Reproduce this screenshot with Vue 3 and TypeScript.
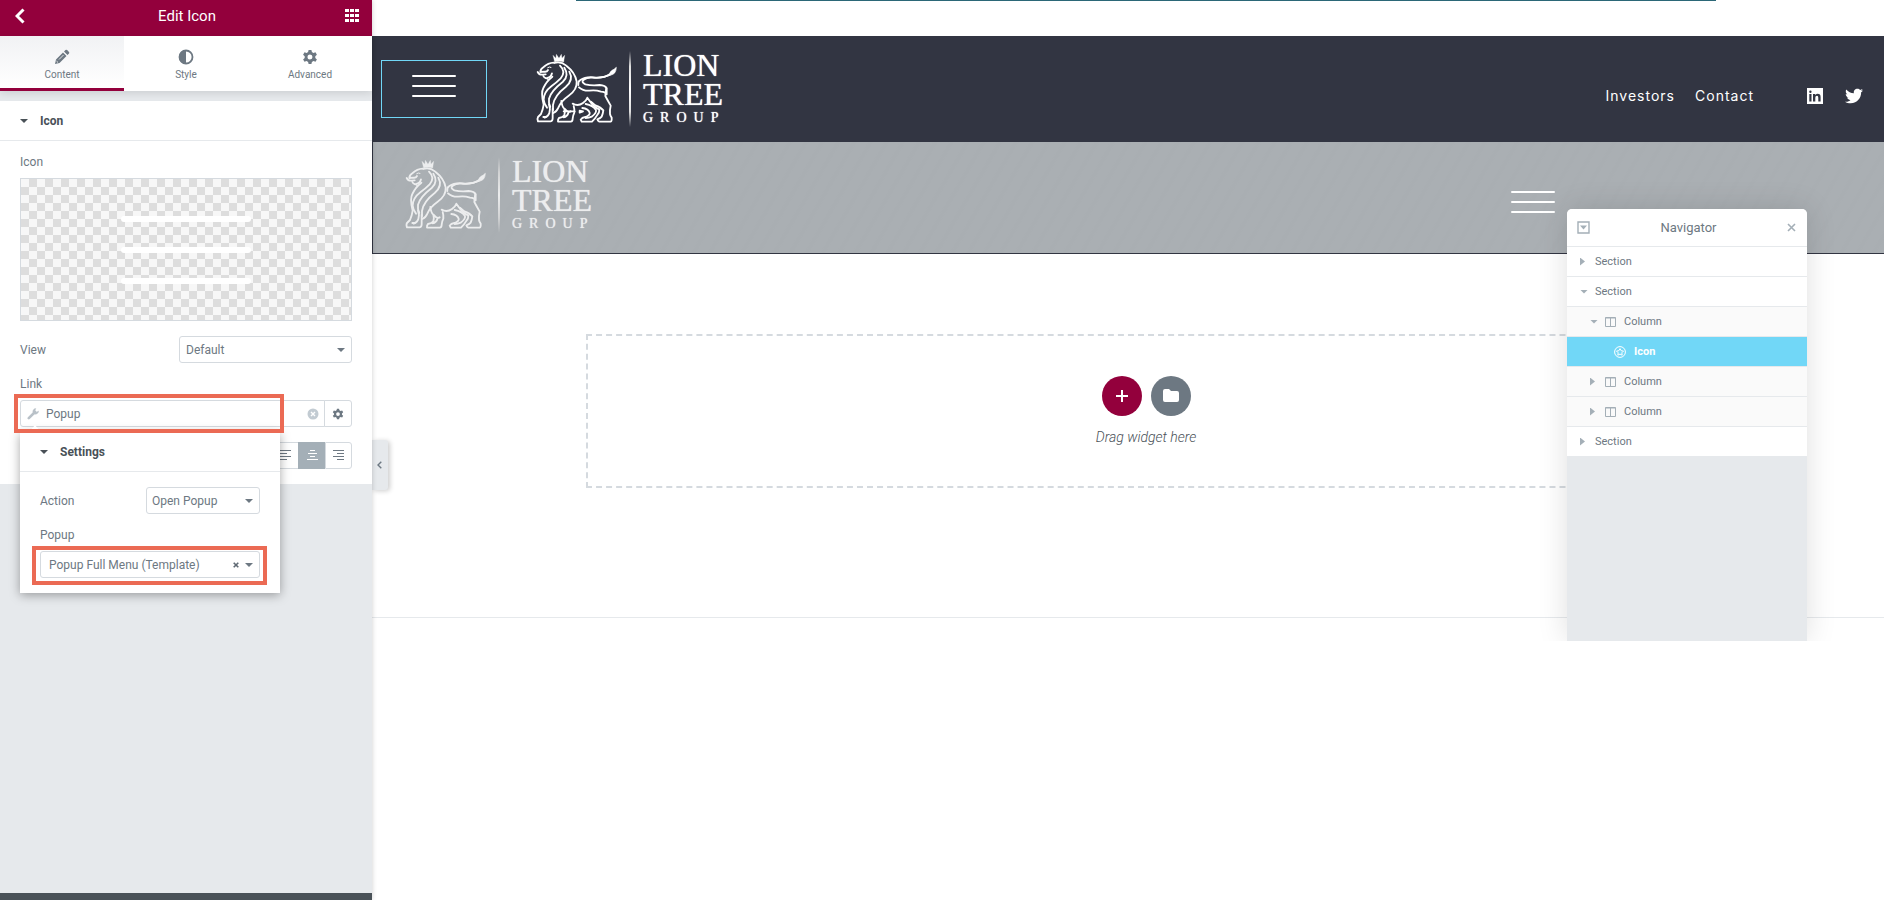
<script setup lang="ts">
import { ref } from 'vue'

interface Tab { id: string; label: string }
interface NavItem { id: number; label: string; kind: 'section' | 'column' | 'widget'; open: boolean }

const tabs: Tab[] = [
  { id: 'content', label: 'Content' },
  { id: 'style', label: 'Style' },
  { id: 'advanced', label: 'Advanced' },
]
const activeTab = ref('content')

const view = ref('Default')
const link = ref('Popup')
const action = ref('Open Popup')
const template = ref('Popup Full Menu (Template)')
const alignment = ref('center')
const alignments = ['left', 'center', 'right']

const alignPaths: Record<string, string> = {
  left: 'M0 1h11M0 4h7M0 7h11M0 10h7',
  center: 'M3 1h5M1 4h9M3 7h5M0 10h11',
  right: 'M0 1h11M4 4h7M0 7h11M4 10h7',
}

const navItems: NavItem[] = [
  { id: 1, label: 'Section', kind: 'section', open: false },
  { id: 2, label: 'Section', kind: 'section', open: true },
  { id: 3, label: 'Column', kind: 'column', open: true },
  { id: 4, label: 'Icon', kind: 'widget', open: false },
  { id: 5, label: 'Column', kind: 'column', open: false },
  { id: 6, label: 'Column', kind: 'column', open: false },
  { id: 7, label: 'Section', kind: 'section', open: false },
]
const logos = ['primary', 'overlay']
const gear = 'M6.600 0h2.800l.5 2.100 1.500.9 2.100-.7 1.400 2.400-1.600 1.500v1.700l1.600 1.500-1.400 2.400-2.100-.7-1.500.9-.5 2.100H6.600l-.5-2.100-1.500-.9-2.100.7L1.100 9.400l1.600-1.500V6.200L1.100 4.700l1.400-2.400 2.100.7 1.500-.9zM8 4.500a2.500 2.500 0 1 0 0 5 2.500 2.500 0 0 0 0-5z'
</script>

<template>
  <div class="editor">
    <aside class="panel">
      <header class="panel-head">
        <button class="plain" aria-label="Back">
          <svg width="14" height="16" viewBox="0 0 14 16"><path d="M8.500 1.500 2 8l6.500 6.500" fill="none" stroke="#fff" stroke-width="3" /></svg>
        </button>
        <h1>Edit Icon</h1>
        <button class="plain" aria-label="Widgets">
          <svg width="14" height="14" viewBox="0 0 14 14" fill="#fff"><path d="M0 0h4v3H0zM5 0h4v3H5zM10 0h4v3h-4zM0 5h4v3H0zM5 5h4v3H5zM10 5h4v3h-4zM0 10h4v3H0zM5 10h4v3H5zM10 10h4v3h-4z" /></svg>
        </button>
      </header>

      <nav class="tabs">
        <button v-for="t in tabs" :key="t.id" class="tab" :class="{ active: t.id === activeTab }" @click="activeTab = t.id">
          <svg v-if="t.id === 'content'" width="16" height="16" viewBox="0 0 16 16">
            <path d="M1 15l1-4.500L9 3.500 12.500 7l-7 7zM10 2.500 11.500 1q.8-.6 1.600 0L15 2.900q.6.8 0 1.600L13.500 6z" fill="#6d7882" />
            <path d="M5 10.500 9.500 6" stroke="#fff" stroke-width=".8" /><path d="M2.600 12.200l1.300 1.200" stroke="#fff" stroke-width="1" />
          </svg>
          <svg v-else-if="t.id === 'style'" width="16" height="16" viewBox="0 0 16 16">
            <circle cx="8" cy="8" r="6.500" fill="#fff" stroke="#6d7882" stroke-width="1.800" /><path d="M8 1a7 7 0 0 0 0 14z" fill="#6d7882" />
          </svg>
          <svg v-else width="16" height="16" viewBox="0 -1 16 16"><path :d="gear" fill="#6d7882" fill-rule="evenodd" /></svg>
          <span>{{ t.label }}</span>
        </button>
      </nav>

      <section class="controls">
        <h2 class="section-title"><i class="caret dark"></i>Icon</h2>
        <div class="fields">
          <p class="label">Icon</p>
          <div class="media">
            <svg width="132" height="68" viewBox="0 0 132 68"><path d="M4 3h124M4 34h124M4 65h124" stroke="#fff" stroke-width="6" stroke-linecap="round" /></svg>
          </div>

          <div class="row view-row">
            <label class="label" for="view">View</label>
            <div class="select">
              <select id="view" v-model="view"><option>Default</option></select>
              <i class="caret"></i>
            </div>
          </div>

          <label class="label link-label" for="link">Link</label>
          <div class="link-control">
            <div class="link-box">
              <svg width="12" height="12" viewBox="0 0 12 12"><path d="M1.800 10.200 8 4" stroke="#b9c1c8" stroke-width="2.600" stroke-linecap="round" /><path d="M8.800.6A3 3 0 0 0 6 4.500L7.600 6a3 3 0 0 0 3.900-2.900L9.700 4.200 7.900 2.500z" fill="#b9c1c8" stroke="#b9c1c8" stroke-width=".5" /></svg>
              <input id="link" v-model="link" type="text" />
              <button class="plain" aria-label="Clear link" @click="link = ''">
                <svg width="12" height="12" viewBox="0 0 12 12"><circle cx="6" cy="6" r="5.500" fill="#c2cbd2" /><path d="m4 4 4 4m0-4L4 8" stroke="#fff" stroke-width="1.400" /></svg>
              </button>
            </div>
            <button class="link-options" aria-label="Link options">
              <svg width="12" height="12" viewBox="0 -1 16 16"><path :d="gear" fill="#6d7882" fill-rule="evenodd" /></svg>
            </button>

            <div class="popover">
              <h2 class="section-title"><i class="caret dark"></i>Settings</h2>
              <div class="popover-fields">
                <div class="row">
                  <label class="label" for="action">Action</label>
                  <div class="select short">
                    <select id="action" v-model="action"><option>Open Popup</option></select>
                    <i class="caret"></i>
                  </div>
                </div>
                <label class="label popup-label" for="template">Popup</label>
                <div class="select template">
                  <select id="template" v-model="template">
                    <option>Popup Full Menu (Template)</option>
                  </select>
                  <button class="plain clear" aria-label="Clear template">
                    <svg width="6" height="6" viewBox="0 0 6 6"><path d="m.7.700 4.600 4.600m0-4.600L.7 5.300" stroke="#5f6973" stroke-width="1.600" /></svg>
                  </button>
                  <i class="caret"></i>
                  <div class="mark"></div>
                </div>
              </div>
            </div>
            <div class="mark link-mark"></div>
          </div>

          <div class="align-row">
            <button v-for="a in alignments" :key="a" :class="{ active: a === alignment }" :aria-label="`Align ${a}`" @click="alignment = a">
              <svg width="11" height="11" viewBox="0 0 11 11"><path :d="alignPaths[a]" stroke="currentColor" stroke-width="1" transform="translate(0 -.5)" /></svg>
            </button>
          </div>
        </div>
      </section>
      <footer class="panel-foot"></footer>
    </aside>

    <main class="canvas">
      <div class="preview">
        <div class="top-strip"><div class="container top-line"></div></div>

        <header v-for="logo in logos" :key="logo" class="site-bar" :class="logo">
          <button v-if="logo === 'primary'" class="burger selected" aria-label="Menu">
            <svg width="44" height="24" viewBox="0 0 44 24"><path d="M1 2h42M1 12h42M1 22h42" stroke="#fff" stroke-width="2" stroke-linecap="round" /></svg>
          </button>
          <a class="logo" href="#" aria-label="Lion Tree Group">
            <svg width="90" height="78" viewBox="0 0 270 234" fill="none" stroke="#fff" stroke-width="5.500" stroke-linecap="round" stroke-linejoin="round">
              <path d="M65 36 60 16l9 9 1-12 8 12 7-12 2 12 8-9-3 20q-14-4-27 0z" fill="#fff" stroke-width="1" />
              <path d="M62 38q-17 1-30 13-10 6-10 15l12-1q8 1 11-5" />
              <path d="M14 66q5 9 14 8l10-1M31 78q4 9 12 6 11-2 14-14" />
              <path d="M44 53q5-4 10-1M37 84l10 6" stroke-width="3" />
              <path d="M64 39q19-6 36 8 26 20 31 47 2 25-24 43-24 17-31 36-5 12-15 16" />
              <path d="M81 47q19 18 2 38-12 12-27 23-24 18-24 41 1 13 10 24" />
              <path d="M94 53q16 24-5 43-35 27-41 50-2 12 4 25" />
              <path d="M109 65q14 25-11 46-34 26-38 54v15" />
              <path d="M58 80q-18 14-27 34-8 15 1 50-2 14-8 28l-9 9q-3 5 0 13h38q6-1 6-9V176" />
              <path d="M48 163q5 14 1 26-3 10-14 14M31 201h9" />
              <path d="M85 153q2 17 9 23 3 9 0 20-4 6-16 8-4 4-3 11h38q6-1 6-9 1-10 5-18 1-11-2-20M96 177q8 12 17 7M92 202q11-2 14-13" />
              <path d="M119 161q16 9 31-2 10-7 13-16l12 17q14 15 24 18 1 10-7 18-5 9-15 19h-31l-3-6q4-7 14-8 15-6 13-13-4-12-22-14" />
              <path d="M158 162q22 4 31 18 2 9-13 20-8 4-18 4M174 155l13 11q17 6 24 15-1 9-5 19-4 5-13 8 1 5 6 7h34q4-1 3-12-4-5-5-11-1-13 2-25-9-16-16-29 0-9 3-24" />
              <path d="M138 112q12 11 31 10 18-3 35 3 14 1 17 8v-18q-4-9-21-10-23 3-43-2-14-7-5-14 10-7 26-6 20 2 38-3 10-2 20-13" />
              <path d="M136 105q-2-10 6-15 16-11 41-8 26 3 47-7" />
              <path d="M233 75q-5-9 4-14 6-2 13-9-1 22-17 23z" fill="#fff" stroke-width="2" />
              <path v-if="logo === 'primary'" d="M92 184h33M140 182l10 2-10 4z" fill="#fff" />
            </svg>
            <i class="divider"></i>
            <span class="wordmark"><b>LION<br />TREE</b><small>GROUP</small></span>
          </a>
          <nav v-if="logo === 'primary'" class="site-nav">
            <a href="#">Investors</a>
            <a href="#">Contact</a>
            <a class="social linkedin" href="#" aria-label="LinkedIn">
              <svg width="16" height="16" viewBox="0 0 16 16"><path d="M0 0h16v16H0z" fill="#fff" /><path d="M2.300 6h2.200v7.500H2.300zM2.200 3.700a1.200 1.200 0 1 0 2.400 0 1.200 1.200 0 0 0-2.400 0zM6 6h2.200v1q2.400-2.400 4.700-.4.700.8.700 2.400v4.500h-2.300V9.700q0-1.900-1.300-1.900-1.700 0-1.700 2v3.700H6z" fill="#323542" /></svg>
            </a>
            <a class="social" href="#" aria-label="Twitter">
              <svg width="18" height="18" viewBox="0 0 512 512"><path fill="#fff" d="M459 152v14c0 138-106 298-298 298-59 0-115-17-161-47 68 8 121-13 156-42-45 0-83-31-98-73 16 2 31 2 47-2-53-10-84-53-84-104 15 8 32 13 48 13-47-32-61-94-33-140 54 66 130 105 217 110-17-72 35-129 102-129 30 0 57 13 76 33 24-5 46-13 67-25-8 24-25 45-46 58 21-2 41-8 60-16-13 20-32 38-53 52z" /></svg>
            </a>
          </nav>
          <button v-else class="burger" aria-label="Menu">
            <svg width="44" height="24" viewBox="0 0 44 24"><path d="M1 2h42M1 12h42M1 22h42" stroke="#fff" stroke-width="2" stroke-linecap="round" /></svg>
          </button>
        </header>

        <div class="drop-area">
          <div class="container">
            <div class="drop-zone">
              <div class="drop-buttons">
                <button class="round add" aria-label="Add section">
                  <svg width="14" height="14" viewBox="0 0 14 14"><path d="M7 1v12M1 7h12" stroke="#fff" stroke-width="2" /></svg>
                </button>
                <button class="round" aria-label="Add template">
                  <svg width="16" height="14" viewBox="0 0 16 14"><path d="M2 0h4l2 2h6q2 0 2 2v7q0 2-2 2H2q-2 0-2-2V2q0-2 2-2z" fill="#fff" /></svg>
                </button>
              </div>
              <p>Drag widget here</p>
            </div>
          </div>
        </div>

        <aside class="navigator">
          <header>
            <button class="plain" aria-label="Expand all">
              <svg width="13" height="13" viewBox="0 0 13 13"><path d="M1 1h11v11H1z" fill="none" stroke="#a4afb7" stroke-width="1.400" /><path d="M3 4.500h7L6.500 8.500z" fill="#a4afb7" /></svg>
            </button>
            <h2>Navigator</h2>
            <button class="plain" aria-label="Close">
              <svg width="9" height="9" viewBox="0 0 9 9"><path d="m1 1 7 7m0-7L1 8" stroke="#a4afb7" stroke-width="1.600" /></svg>
            </button>
          </header>
          <ul>
            <li v-for="item in navItems" :key="item.id" :class="item.kind">
              <i v-if="item.kind !== 'widget'" class="arrow" :class="{ open: item.open }"></i>
              <svg v-if="item.kind === 'column'" width="11" height="10" viewBox="0 0 11 10"><path d="M.5.500h10v9H.5zM5.500.500v9M.5 1h10" fill="none" stroke="#a4afb7" /></svg>
              <svg v-if="item.kind === 'widget'" width="12" height="12" viewBox="0 0 12 12" fill="none" stroke="#fff"><circle cx="6" cy="6" r="5.400" /><path d="m6 2.600 1.100 2.100 2.400.4-1.700 1.700.4 2.400L6 8.100 3.800 9.200l.4-2.400-1.700-1.700 2.400-.4z" /></svg>
              <span>{{ item.label }}</span>
            </li>
          </ul>
        </aside>
      </div>

      <button class="collapse" aria-label="Collapse panel">
        <svg width="5" height="8" viewBox="0 0 5 8"><path d="M4.300.700 1 4l3.300 3.300" fill="none" stroke="#6d7882" stroke-width="1.400" /></svg>
      </button>
    </main>
  </div>
</template>

<style>
body { margin: 0; background: #fff; }
</style>

<style scoped>
* { box-sizing: border-box; }
h1, h2, p, ul { margin: 0; padding: 0; }
svg { display: block; flex: none; }
button, input, select { font: inherit; color: inherit; margin: 0; }
button { cursor: pointer; }
.editor { display: flex; min-height: 100vh; font-family: Roboto, "Liberation Sans", sans-serif; font-size: 12px; line-height: 16px; color: #6d7882; }
.plain { border: 0; background: none; padding: 0; }

.panel { width: 372px; flex: none; display: flex; flex-direction: column; background: #e6e9ec; position: relative; z-index: 2; box-shadow: 0 0 5px rgba(0, 0, 0, .2); }
.panel-head { height: 36px; padding: 0 13px 4px 15px; background: #93003c; color: #fff; display: flex; align-items: center; justify-content: space-between; }
.panel-head h1 { font-size: 15px; font-weight: 400; }
.tabs { display: grid; grid-template-columns: repeat(3, 1fr); height: 55px; background: #fff; box-shadow: 0 2px 8px rgba(0, 0, 0, .12); }
.tab { border: 0; border-bottom: 3px solid transparent; background: #fff; display: flex; flex-direction: column; align-items: center; gap: 2px; padding: 13px 0 0; font-size: 10px; line-height: 16px; }
.tab.active { border-bottom-color: #93003c; background: linear-gradient(#f1f2f4, #fff); background-clip: padding-box; }
.controls { margin-top: 10px; background: #fff; }
.section-title { height: 40px; padding: 0 20px; border-bottom: 1px solid #e6e9ec; display: flex; align-items: center; gap: 12px; font-size: 12px; font-weight: 700; color: #495157; }
.caret { width: 0; height: 0; border: 4px solid transparent; border-top-color: #6d7882; border-bottom: 0; flex: none; }
.caret.dark { border-top-color: #495157; }
.fields { padding: 13px 20px 15px; }
.label { display: block; font-size: 12px; line-height: 16px; }
.media { margin-top: 8px; height: 143px; border: 1px solid #d5dadf; display: flex; align-items: center; justify-content: center; background: conic-gradient(#ddd 25%, #f7f7f7 0 50%, #ddd 0 75%, #f7f7f7 0) 0 0 / 16px 16px; }
.row { display: flex; align-items: center; justify-content: space-between; }
.view-row { margin-top: 15px; }
.select { position: relative; display: flex; align-items: center; width: 173px; height: 27px; border: 1px solid #d5dadf; border-radius: 3px; padding-right: 6px; background: #fff; }
.select select { appearance: none; border: 0; background: none; flex: 1; min-width: 0; padding: 0 6px; height: 25px; outline: none; }
.select.short { width: 114px; }
.select.short select { padding: 0 5px; }
.select.template { width: 100%; margin-top: 8px; }
.select.template select { padding: 0 0 0 8px; }
.select .clear { margin-right: 6px; }
.link-label { margin-top: 13px; }
.link-control { position: relative; display: flex; height: 27px; margin-top: 8px; }
.link-box { flex: 1; display: flex; align-items: center; padding: 0 5px 0 6px; border: 1px solid #d5dadf; border-radius: 3px 0 0 3px; }
.link-box input { flex: 1; min-width: 0; border: 0; padding: 0 7px; outline: none; background: none; height: 24px; }
.link-options { width: 28px; border: 1px solid #d5dadf; margin-left: -1px; border-radius: 0 3px 3px 0; background: #fff; display: grid; place-items: center; padding: 0; }
.mark { position: absolute; border: 4px solid #eb6a54; inset: -6px -8px -8px -9px; pointer-events: none; }
.link-mark { inset: -6px 68px -6px -6px; z-index: 3; }
.popover { position: absolute; z-index: 2; left: 0; top: 32px; width: 260px; background: #fff; box-shadow: 0 2px 10px rgba(0, 0, 0, .35); }
.popover::before { content: ""; position: absolute; left: 9px; top: -7px; border: 6px solid transparent; border-bottom: 7px solid #fff; border-top: 0; }
.popover-fields { padding: 15px 20px; }
.popup-label { margin-top: 13px; }
.align-row { display: flex; justify-content: flex-end; margin-top: 15px; }
.align-row button { width: 27px; height: 27px; border: 1px solid #d5dadf; border-right-width: 0; background: #fff; display: grid; place-items: center; padding: 0; }
.align-row button:last-child { border-right-width: 1px; border-radius: 0 3px 3px 0; }
.align-row button.active { background: #a4afb7; border-color: #a4afb7; color: #fff; }
.panel-foot { height: 7px; margin-top: auto; background: #495157; }

.canvas { flex: 1; min-width: 0; position: relative; background: #fff; }
.preview { position: relative; overflow: hidden; padding-bottom: 23px; }
.container { max-width: 1140px; margin: 0 auto; }
.top-strip { height: 36px; padding-left: 36px; }
.top-line { height: 1px; background: #2b6777; }
.site-bar { display: flex; align-items: flex-start; background: #323542; }
.primary { height: 106px; padding: 14px 21px 0 9px; }
.overlay { height: 112px; padding: 14px 329px 0 29px; border-left: 1px solid #323542; border-bottom: 1px solid #323542; background: repeating-linear-gradient(120deg, #aaafb3 0 8px, #a9aeb2 10px 12px, #aaafb3 14px); }
.burger { width: 106px; height: 58px; padding: 0; border: 0; background: none; display: flex; align-items: center; justify-content: center; }
.burger.selected { border: 1px solid #71d7f7; margin: 10px 46px 0 0; padding: 0 0 7px; }
.overlay .burger { width: 44px; height: 24px; margin: 34px 0 0 auto; }
.logo { display: flex; color: #fff; text-decoration: none; }
.overlay .logo { opacity: .78; }
.divider { width: 2px; height: 76px; margin: 1px 12px 0 6px; background: linear-gradient(transparent, #ddd 20%, #fff 50%, #ddd 80%, transparent); }
.wordmark { display: flex; flex-direction: column; padding-top: 1px; font-family: "Liberation Serif", serif; text-shadow: 0 0 1px currentColor; }
.wordmark b { font-weight: 400; font-size: 32px; line-height: 29px; }
.wordmark small { font-size: 14px; line-height: 18px; letter-spacing: 7px; }
.site-nav { margin: 36px 0 0 auto; height: 20px; display: flex; align-items: center; }
.site-nav a { color: #fff; text-decoration: none; font: 400 14px/20px Inter, "Liberation Sans", sans-serif; letter-spacing: 1px; margin-right: 20px; }
.site-nav .linkedin { margin-left: 33px; margin-right: 22px; }
.site-nav .social:last-child { margin-right: 0; }

.drop-area { padding: 80px 0 129px 36px; border-bottom: 1px solid #e6e9ec; }
.drop-zone { margin: 0 10px; height: 154px; border: 2px dashed #d5dadf; display: flex; flex-direction: column; align-items: center; justify-content: center; gap: 12px; }
.drop-buttons { display: flex; gap: 9px; }
.round { width: 40px; height: 40px; border: 0; border-radius: 50%; background: #6d7882; display: grid; place-items: center; padding: 0; }
.round.add { background: #93003c; }
.drop-zone p { font-size: 14px; line-height: 18px; font-style: italic; font-weight: 300; color: #495157; }

.navigator { position: absolute; top: 209px; right: 77px; bottom: 0; width: 240px; background: #e6e9ec; border-radius: 5px 5px 0 0; box-shadow: 0 0 30px rgba(0, 0, 0, .13); }
.navigator header { height: 38px; padding: 0 11px 0 10px; background: #fff; border-radius: 5px 5px 0 0; border-bottom: 1px solid #e6e9ec; display: flex; align-items: center; justify-content: space-between; }
.navigator h2 { font-size: 13px; font-weight: 400; }
.navigator ul { list-style: none; }
.navigator li { height: 30px; display: flex; align-items: center; padding-left: 13px; background: #fff; border-bottom: 1px solid #e6e9ec; font-size: 11px; }
.navigator li:last-child { border-bottom: 0; height: 29px; }
.navigator li.column { padding-left: 23px; background: #fafafa; }
.navigator li.column svg { margin-right: 8px; }
.navigator li.widget { padding-left: 47px; gap: 8px; background: #71d7f7; color: #fff; font-weight: 700; }
.arrow { width: 5px; height: 8px; margin-right: 10px; background: #a4afb7; clip-path: polygon(0 0, 100% 50%, 0 100%); }
.arrow.open { width: 8px; height: 4px; margin-right: 7px; clip-path: polygon(0 0, 100% 0, 50% 100%); }

.collapse { position: absolute; left: 0; top: 440px; width: 16px; height: 50px; padding: 0 2px 0 0; border: 0; background: #e6e9ec; border-radius: 0 3px 3px 0; box-shadow: 2px 1px 5px rgba(0, 0, 0, .2); display: grid; place-items: center; }
</style>
